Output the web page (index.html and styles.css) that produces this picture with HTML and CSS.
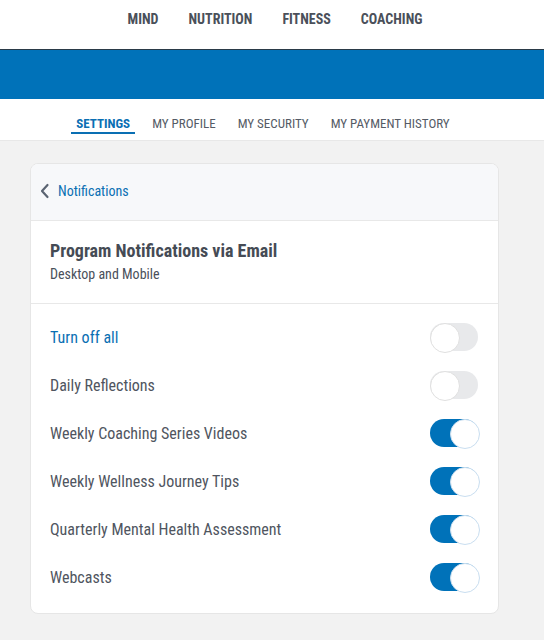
FILE: index.html
```html
<!DOCTYPE html>
<html>
<head>
<meta charset="utf-8">
<link rel="stylesheet" href="styles.css">
</head>
<body>
<header class="topnav">
  <a>MIND</a><a>NUTRITION</a><a>FITNESS</a><a>COACHING</a>
</header>
<div class="band"></div>
<nav class="tabs">
  <a class="active">SETTINGS</a><a>MY PROFILE</a><a>MY SECURITY</a><a>MY PAYMENT HISTORY</a>
</nav>
<main class="content">
  <section class="card">
    <div class="card-head">
      <svg class="chev" width="10" height="16" viewBox="0 0 10 16"><path d="M7.5 2 L2 8 L7.5 14" fill="none" stroke="#5b6472" stroke-width="2.2" stroke-linecap="round" stroke-linejoin="round"/></svg>
      <span class="back">Notifications</span>
    </div>
    <div class="card-title">
      <h2>Program Notifications via Email</h2>
      <p>Desktop and Mobile</p>
    </div>
    <ul class="list">
      <li><span class="lbl blue">Turn off all</span><span class="tog"></span></li>
      <li><span class="lbl">Daily Reflections</span><span class="tog"></span></li>
      <li><span class="lbl">Weekly Coaching Series Videos</span><span class="tog on"></span></li>
      <li><span class="lbl">Weekly Wellness Journey Tips</span><span class="tog on"></span></li>
      <li><span class="lbl">Quarterly Mental Health Assessment</span><span class="tog on"></span></li>
      <li><span class="lbl">Webcasts</span><span class="tog on"></span></li>
    </ul>
  </section>
</main>
</body>
</html>
```
FILE: styles.css
```css
* { box-sizing: border-box; }
html, body { margin: 0; padding: 0; }
body {
  font-family: "Roboto Condensed", Roboto, "Liberation Sans", sans-serif;
  color: #4a505a;
  background: #f2f2f2;
  width: 544px;
  height: 640px;
  overflow: hidden;
}
.topnav {
  height: 49px;
  background: #fff;
  display: flex;
  justify-content: center;
  gap: 30px;
  padding-top: 11px;
  padding-left: 6px;
  font-size: 14px;
  font-weight: 700;
  color: #4a505a;
}
.band {
  height: 50px;
  background: #0072b9;
  border-top: 1px solid #2a3a48;
}
.tabs {
  height: 42px;
  background: #fff;
  display: flex;
  justify-content: center;
  gap: 22px;
  padding-top: 17px;
  padding-right: 18px;
  font-size: 13px;
  color: #555b66;
  border-bottom: 1px solid #e8e8e8;
}
.tabs a { height: 18px; }
.tabs a.active {
  color: #0a6fb3;
  font-weight: 700;
  border-bottom: 2px solid #0a6fb3;
  padding: 0 5px;
  margin: 0 -5px;
}
.content { padding: 22px 45px 0 30px; }
.card {
  background: #fff;
  border: 1px solid #e6e6e6;
  border-radius: 8px;
  overflow: hidden;
}
.card-head {
  height: 57px;
  background: #f7f8fa;
  border-bottom: 1px solid #e8e8e8;
  display: flex;
  align-items: center;
  gap: 8px;
  padding-left: 9px;
  padding-bottom: 2px;
}
.back { font-size: 14px; color: #0a6fb3; }
.card-title {
  height: 83px;
  border-bottom: 1px solid #e8e8e8;
  padding: 19px 19px 0;
}
.card-title h2 { margin: 0; font-size: 18px; font-weight: 700; color: #454b55; line-height: 22px; }
.card-title p { margin: 3px 0 0; font-size: 14px; color: #4a505a; line-height: 18px; }
.list { list-style: none; margin: 0; padding: 9px 20px 12px 19px; }
.list li {
  height: 48px;
  display: flex;
  align-items: center;
  justify-content: space-between;
}
.lbl { font-size: 16px; color: #4f5560; }
.lbl.blue { color: #0a6fb3; }
.tog {
  width: 48px;
  height: 28px;
  border-radius: 14px;
  background: #e8e9eb;
  position: relative;
}
.tog::after {
  content: "";
  position: absolute;
  left: 0;
  top: 0;
  width: 28px;
  height: 28px;
  border-radius: 50%;
  background: #fff;
  border: 1px solid #e0e0e0;
}
.tog.on { background: #0072b9; }
.tog.on::after { left: 20px; border-color: #c9def0; }
```
